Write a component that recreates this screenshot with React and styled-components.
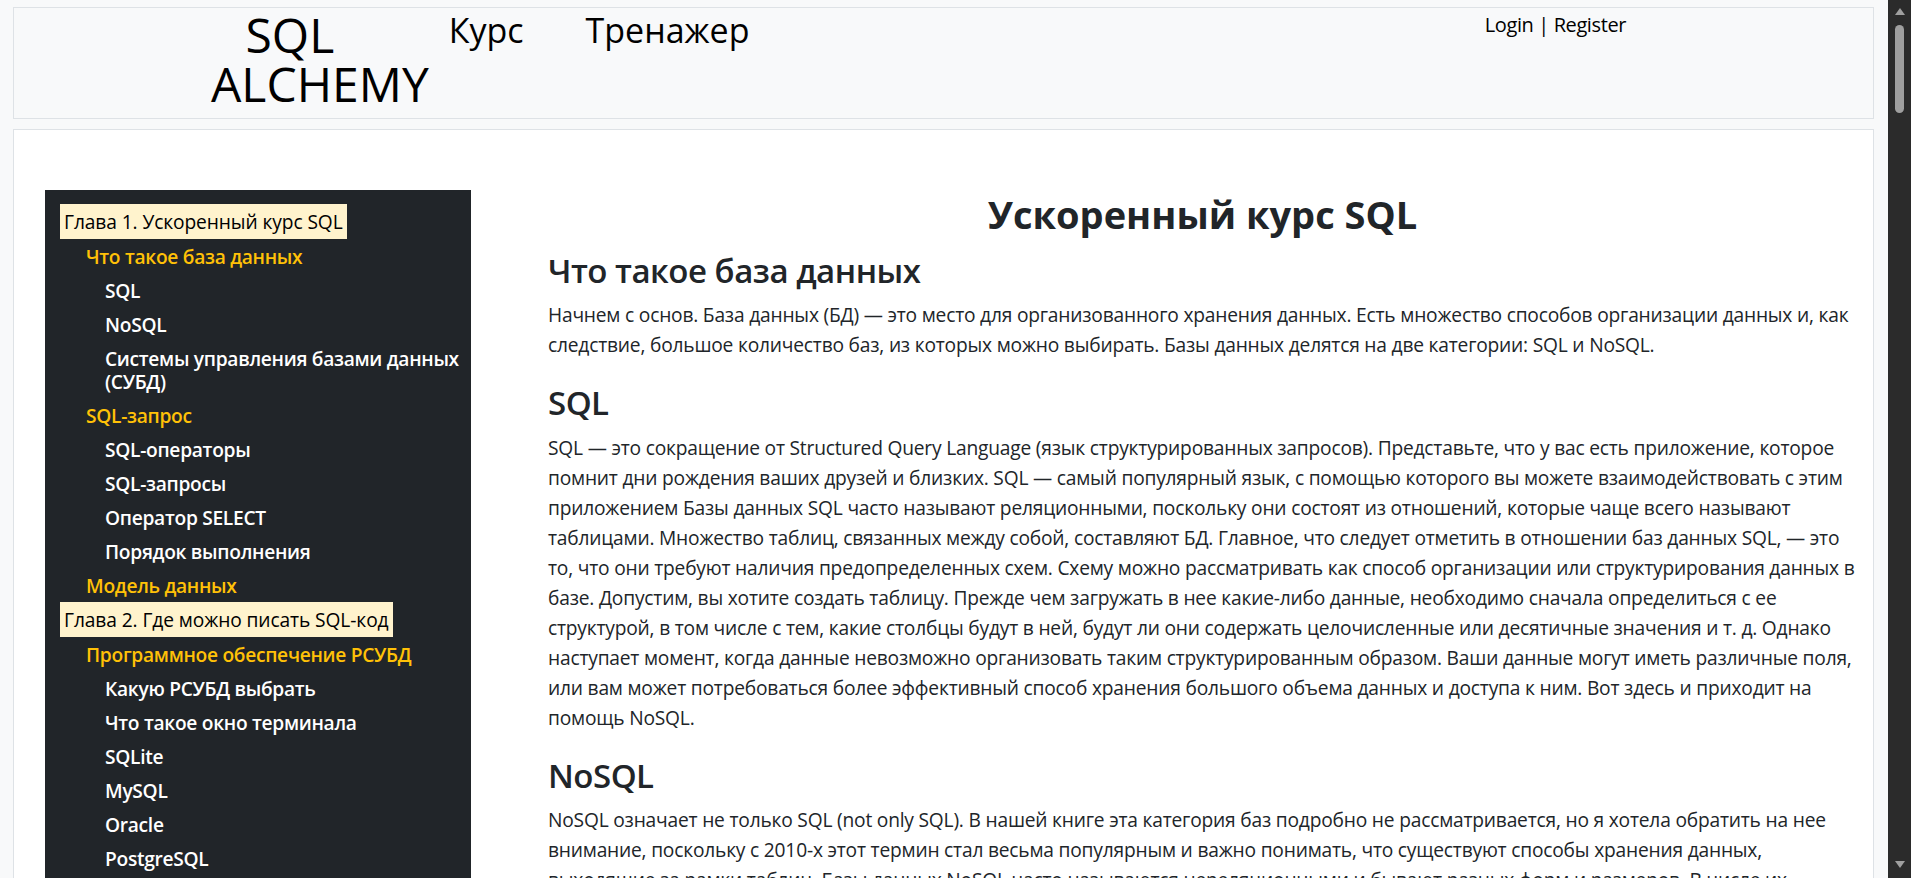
import React from 'react';
import styled, { createGlobalStyle } from 'styled-components';

const GlobalStyle = createGlobalStyle`
  html, body {
    margin: 0;
  }

  body {
    background: #f8f9fa;
    font-family: "Open Sans", "Noto Sans", sans-serif;
    color: #212529;
  }
`;

const chapters = [
  {
    title: 'Глава 1. Ускоренный курс SQL',
    sections: [
      { title: 'Что такое база данных', topics: ['SQL', 'NoSQL', 'Системы управления базами данных (СУБД)'] },
      { title: 'SQL-запрос', topics: ['SQL-операторы', 'SQL-запросы', 'Оператор SELECT', 'Порядок выполнения'] },
      { title: 'Модель данных', topics: [] },
    ],
  },
  {
    title: 'Глава 2. Где можно писать SQL-код',
    sections: [
      {
        title: 'Программное обеспечение РСУБД',
        topics: ['Какую РСУБД выбрать', 'Что такое окно терминала', 'SQLite', 'MySQL', 'Oracle', 'PostgreSQL', 'SQL Server'],
      },
      { title: 'Инструменты для работы с базами данных', topics: [] },
    ],
  },
];

const articles = [
  {
    heading: 'Что такое база данных',
    text:
      'Начнем с основ. База данных (БД) — это место для организованного хранения данных. Есть множество способов организации данных и, как следствие, большое количество баз, из которых можно выбирать. Базы данных делятся на две категории: SQL и NoSQL.',
  },
  {
    heading: 'SQL',
    text:
      'SQL — это сокращение от Structured Query Language (язык структурированных запросов). Представьте, что у вас есть приложение, которое помнит дни рождения ваших друзей и близких. SQL — самый популярный язык, с помощью которого вы можете взаимодействовать с этим приложением Базы данных SQL часто называют реляционными, поскольку они состоят из отношений, которые чаще всего называют таблицами. Множество таблиц, связанных между собой, составляют БД. Главное, что следует отметить в отношении баз данных SQL, — это то, что они требуют наличия предопределенных схем. Схему можно рассматривать как способ организации или структурирования данных в базе. Допустим, вы хотите создать таблицу. Прежде чем загружать в нее какие-либо данные, необходимо сначала определиться с ее структурой, в том числе с тем, какие столбцы будут в ней, будут ли они содержать целочисленные или десятичные значения и т. д. Однако наступает момент, когда данные невозможно организовать таким структурированным образом. Ваши данные могут иметь различные поля, или вам может потребоваться более эффективный способ хранения большого объема данных и доступа к ним. Вот здесь и приходит на помощь NoSQL.',
  },
  {
    heading: 'NoSQL',
    text:
      'NoSQL означает не только SQL (not only SQL). В нашей книге эта категория баз подробно не рассматривается, но я хотела обратить на нее внимание, поскольку с 2010-х этот термин стал весьма популярным и важно понимать, что существуют способы хранения данных, выходящие за рамки таблиц. Базы данных NoSQL часто называются нереляционными и бывают разных форм и размеров. В числе их основных характеристик можно назвать отсутствие жесткой схемы, хорошую горизонтальную масштабируемость и гибкость в работе с данными.',
  },
];

const Page = styled.div`
  display: flex;
  flex-direction: column;
  gap: 10px;
  padding: 7px 37px 0 13px;
`;

const Header = styled.header`
  box-sizing: border-box;
  display: flex;
  align-items: flex-start;
  height: 112px;
  padding: 2px 247px 0 197px;
  background: #f8f9fa;
  border: 1px solid #dee2e6;
  color: #000;
`;

const Logo = styled.a`
  display: flex;
  flex-direction: column;
  align-items: center;
  font-size: 48px;
  line-height: 49px;
  color: #000;
  text-decoration: none;
`;

const LogoLine = styled.span`
  padding-right: ${(p) => p.$shift || 0}px;
`;

const Nav = styled.nav`
  display: flex;
  gap: 62px;
  margin-left: 20px;
`;

const NavLink = styled.a`
  font-size: 34px;
  line-height: 40px;
  color: #000;
  text-decoration: none;
`;

const Auth = styled.div`
  margin-left: auto;
  font-size: 20px;
  line-height: 30px;
  letter-spacing: -0.4px;
  color: #000;

  a {
    color: #000;
    text-decoration: none;
  }
`;

const Card = styled.main`
  display: grid;
  grid-template-columns: 426px 1fr;
  column-gap: 77px;
  align-items: start;
  padding: 60px 16px 0 31px;
  background: #fff;
  border: 1px solid #dee2e6;
`;

const Sidebar = styled.aside`
  padding: 14px 8px 14px 15px;
  background: #212529;
  font-size: 19.2px;
  line-height: 23px;
  letter-spacing: -0.3px;
`;

const Chapter = styled.div`
  width: fit-content;
  padding: 6px 4px;
  background: #fff3cd;
  color: #000;
  letter-spacing: -0.1px;
`;

const NavItem = styled.div`
  padding: 5.5px 0 5.5px ${(p) => (p.$level === 2 ? 26 : 45)}px;
  color: ${(p) => (p.$level === 2 ? '#ffc107' : '#fff')};
  font-weight: 600;
`;

const Article = styled.article`
  padding-top: 2px;
`;

const Title = styled.h1`
  margin: 0 0 13px;
  font-size: 38px;
  line-height: 1.2;
  font-weight: 700;
  text-align: center;
`;

const Heading = styled.h2`
  margin: 0 0 10px;
  font-size: 33px;
  line-height: 1.2;
  font-weight: 600;
  letter-spacing: -0.5px;
`;

const Paragraph = styled.p`
  margin: 0 0 23px;
  font-size: 19.2px;
  line-height: 30px;
  letter-spacing: -0.2px;
`;

/* браузерная полоса прокрутки из скриншота (тёмная тема) */
const Scrollbar = styled.div`
  position: fixed;
  top: 0;
  right: 0;
  bottom: 0;
  width: 23px;
  display: flex;
  flex-direction: column;
  align-items: center;
  padding: 8px 0 10px;
  box-sizing: border-box;
  background: #2b2b2b;
`;

const Arrow = styled.span`
  width: 0;
  height: 0;
  border-left: 5px solid transparent;
  border-right: 5px solid transparent;
  ${(p) => (p.$down ? 'border-top' : 'border-bottom')}: 7px solid #9f9f9f;
  ${(p) => p.$down && 'margin-top: auto;'}
`;

const Thumb = styled.span`
  width: 9px;
  height: 88px;
  margin-top: 10px;
  border-radius: 5px;
  background: #9f9f9f;
`;

export default function App() {
  return (
    <>
      <GlobalStyle />
      <Page>
        <Header>
          <Logo href="#">
            <LogoLine $shift={60}>SQL</LogoLine>
            <LogoLine>ALCHEMY</LogoLine>
          </Logo>
          <Nav>
            <NavLink href="#">Курс</NavLink>
            <NavLink href="#">Тренажер</NavLink>
          </Nav>
          <Auth>
            <a href="#">Login</a> | <a href="#">Register</a>
          </Auth>
        </Header>
        <Card>
          <Sidebar>
            {chapters.map((ch) => (
              <React.Fragment key={ch.title}>
                <Chapter>{ch.title}</Chapter>
                {ch.sections.map((s) => (
                  <React.Fragment key={s.title}>
                    <NavItem $level={2}>{s.title}</NavItem>
                    {s.topics.map((t) => (
                      <NavItem key={t} $level={3}>
                        {t}
                      </NavItem>
                    ))}
                  </React.Fragment>
                ))}
              </React.Fragment>
            ))}
          </Sidebar>
          <Article>
            <Title>Ускоренный курс SQL</Title>
            {articles.map((a) => (
              <section key={a.heading}>
                <Heading>{a.heading}</Heading>
                <Paragraph>{a.text}</Paragraph>
              </section>
            ))}
          </Article>
        </Card>
      </Page>
      <Scrollbar>
        <Arrow />
        <Thumb />
        <Arrow $down />
      </Scrollbar>
    </>
  );
}
